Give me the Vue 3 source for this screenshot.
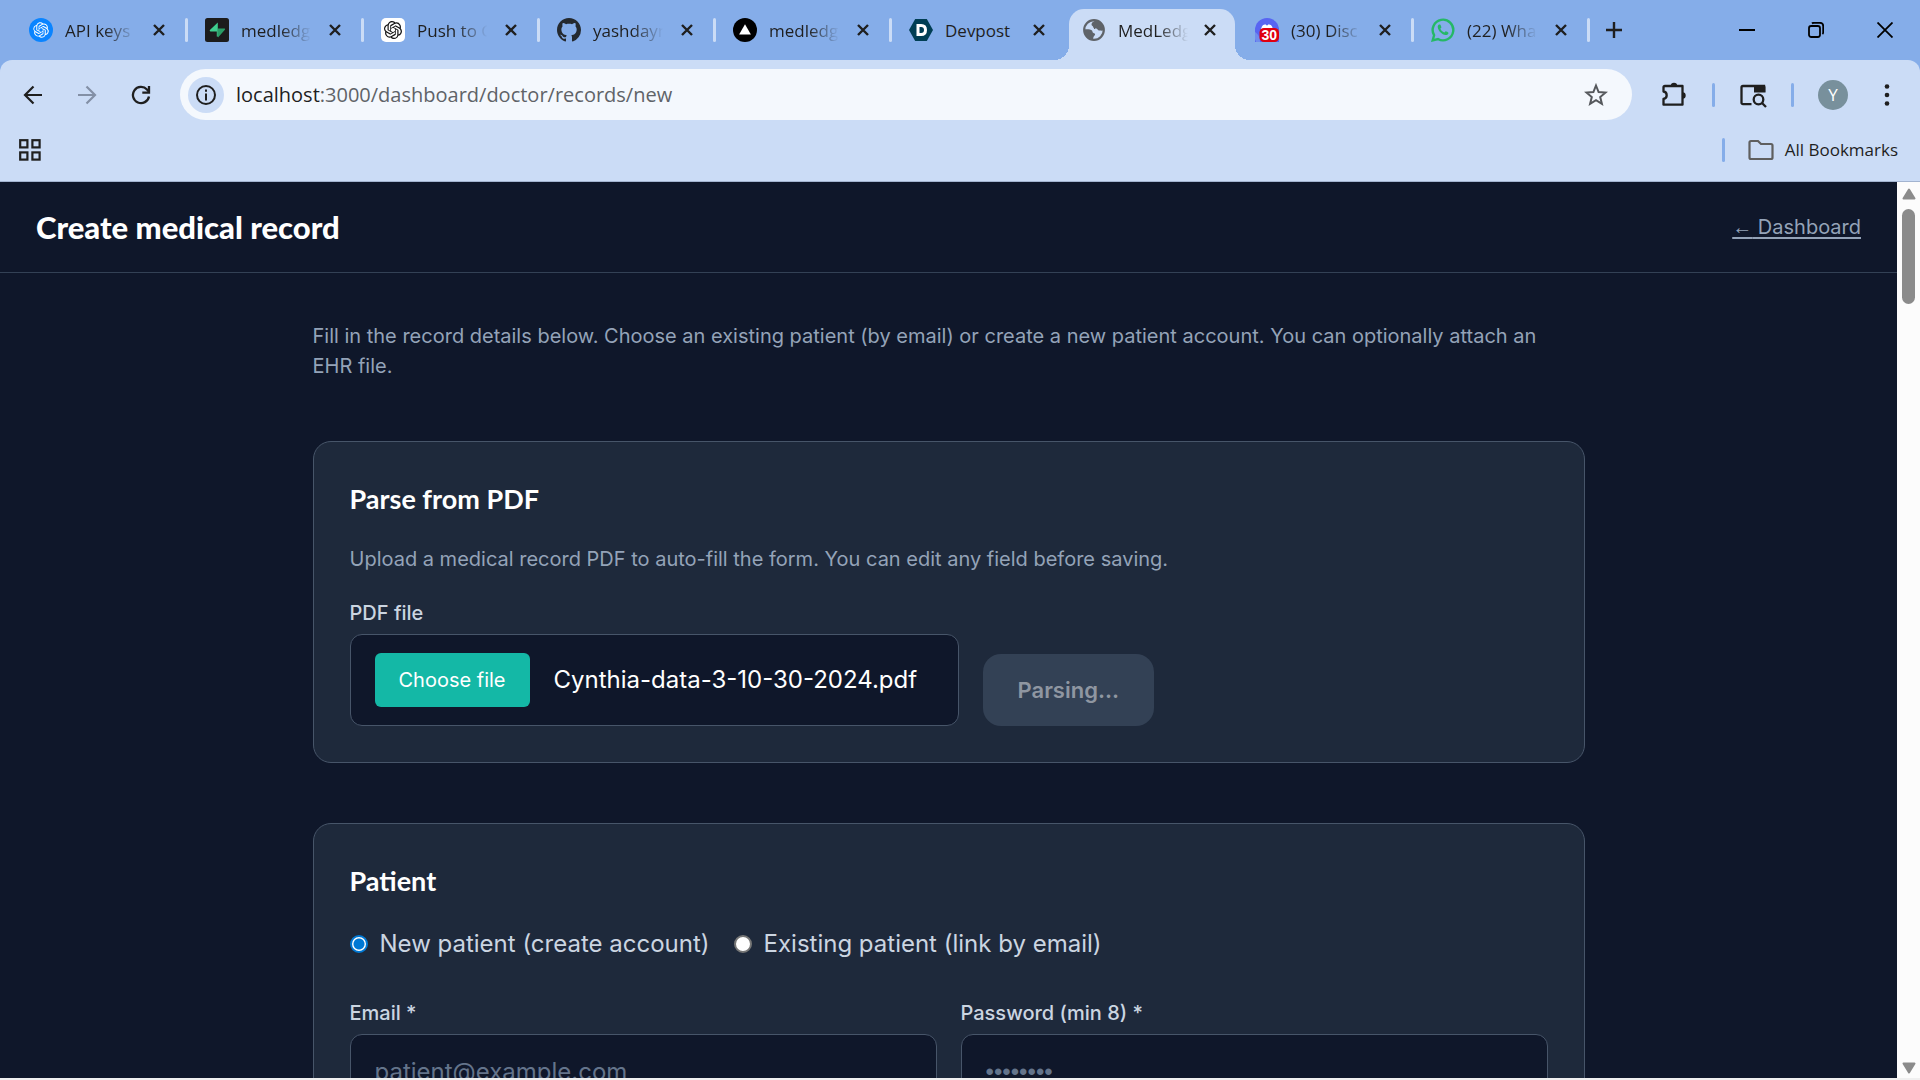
<template>
  <div class="browser">
    <header class="tab-strip">
      <nav class="tabs" aria-label="Open tabs">
        <div
          v-for="(t, i) in tabs" :key="i"
          class="tab" :class="{ active: t.active, plain: t.plain }"
        >
          <svg v-if="t.icon === 'openai'" class="fav" viewBox="0 0 24 24">
            <circle cx="12" cy="12" r="12" fill="#0a84ff" />
            <path :d="knot" fill="#fff" transform="translate(4.2 4.2) scale(.65)" />
          </svg>
          <svg v-else-if="t.icon === 'supabase'" class="fav" viewBox="0 0 24 24">
            <rect width="24" height="24" rx="2.5" fill="#1c1c1c" />
            <path d="M13 4.6v6h6.4c.6 0 .9.7.5 1.2L13 19.6z" fill="#2a9d66" />
            <path d="M12.8 4.6v14.2l-1-.2v-5.2H5.5c-.7 0-1-.8-.6-1.3z" fill="#3ecf8e" />
          </svg>
          <svg v-else-if="t.icon === 'chatgpt'" class="fav" viewBox="0 0 24 24">
            <rect width="24" height="24" rx="5" fill="#fff" />
            <path :d="knot" fill="#111" transform="translate(3 3) scale(.75)" />
          </svg>
          <svg v-else-if="t.icon === 'github'" class="fav" viewBox="0 0 16 16">
            <path fill="#24292f" d="M8 0C3.58 0 0 3.58 0 8c0 3.54 2.29 6.53 5.47 7.59.4.07.55-.17.55-.38 0-.19-.01-.82-.01-1.49-2.01.37-2.53-.49-2.69-.94-.09-.23-.48-.94-.82-1.13-.28-.15-.68-.52-.01-.53.63-.01 1.08.58 1.23.82.72 1.21 1.87.87 2.33.66.07-.52.28-.87.51-1.07-1.78-.2-3.64-.89-3.64-3.95 0-.87.31-1.59.82-2.15-.08-.2-.36-1.02.08-2.12 0 0 .67-.21 2.2.82.64-.18 1.32-.27 2-.27s1.36.09 2 .27c1.53-1.04 2.2-.82 2.2-.82.44 1.1.16 1.92.08 2.12.51.56.82 1.27.82 2.15 0 3.07-1.87 3.75-3.65 3.95.29.25.54.73.54 1.48 0 1.07-.01 1.93-.01 2.2 0 .21.15.46.55.38A8.01 8.01 0 0 0 16 8c0-4.42-3.58-8-8-8z" />
          </svg>
          <svg v-else-if="t.icon === 'vercel'" class="fav" viewBox="0 0 24 24">
            <circle cx="12" cy="12" r="12" fill="#000" />
            <path d="M12 6.2l5.9 10.3H6.1z" fill="#fff" />
          </svg>
          <svg v-else-if="t.icon === 'devpost'" class="fav" viewBox="0 0 24 24">
            <path d="M6.2 1h11.6L24 12l-6.2 11H6.2L0 12z" fill="#003e54" />
            <path d="M9 7.5h3.2c2.9 0 4.3 1.9 4.3 4.5s-1.5 4.5-4.3 4.5H9z" fill="none" stroke="#fff" stroke-width="3" />
          </svg>
          <svg v-else-if="t.icon === 'globe'" class="fav" viewBox="0 0 24 24">
            <circle cx="12" cy="12" r="9.8" fill="none" stroke="#5f6368" stroke-width="2.2" />
            <path fill="#5f6368" d="M13.5 2.5c-2 1-3.8 2-4 3.8-.1 1.5 1.5 1.5 1.7 2.7.2 1.5 1.5 1.4 3 1.4 1.3 0 1.4 2.1 3 2.1 1.9 0 3.2.6 4.8-.5.3-5-3.5-9-8.5-9.5zM2 11.5c2.5-.6 7-.2 8 1 .8 1.2.2 2.2 1.5 2.4 2 .2 2 2 .8 2.9-1 .8-.8 2-1.5 4C5.5 21.5 2 17 2 11.5z" />
          </svg>
          <svg v-else-if="t.icon === 'discord'" class="fav" viewBox="0 0 24 24">
            <path d="M0 24V12a12 12 0 0 1 24 0v12H9z" fill="#5865f2" />
            <path d="M0 21V14c3 2 5 5 5 10H1z" fill="#85ade9" opacity=".55" />
            <path d="M6 12.5c.2-3 1.2-5 2.2-5.5l2.3-.7.6 1h1.8l.6-1 2.3.7c1 .5 2 2.5 2.2 5.5z" fill="#fff" />
            <rect x="4.5" y="10" width="19.5" height="14" rx="4.5" fill="#e00010" />
            <text x="14.2" y="22" text-anchor="middle" class="count">30</text>
          </svg>
          <svg v-else class="fav" viewBox="0 0 24 24">
            <path d="M1.7 22.3l1.4-5.1a10.3 10.3 0 1 1 3.9 3.8z" fill="none" stroke="#25b866" stroke-width="2.4" />
            <path d="M8.2 6.5c-.9.3-1.6 1.3-1.5 2.5.4 3.9 4.3 7.6 7.8 8.1 1.4.2 3-.9 3-2.3 0-.5-2.4-1.7-2.8-1.6-.5.1-1 1.4-1.5 1.3-1.6-.6-3.2-2.2-3.8-3.7-.1-.5 1-1 1-1.5 0-.4-.9-2.7-1.2-2.8z" fill="#25b866" />
          </svg>
          <span class="tab-title" :class="{ fade: t.fade }">{{ t.title }}</span>
          <button class="icon-btn tab-close" :aria-label="'Close ' + t.title">
            <svg width="14" height="14" viewBox="0 0 14 14"><path d="M2 2l10 10M12 2L2 12" stroke="#1f1f1f" stroke-width="2.4" /></svg>
          </button>
        </div>
      </nav>
      <button class="icon-btn new-tab" aria-label="New tab">
        <svg width="16" height="16" viewBox="0 0 16 16"><path d="M8 0v16M0 8h16" stroke="#1f1f1f" stroke-width="2.4" /></svg>
      </button>
      <div class="window-controls">
        <button class="icon-btn" aria-label="Minimize">
          <svg width="16" height="16" viewBox="0 0 16 16"><path d="M0 8h16" stroke="#000" stroke-width="2" /></svg>
        </button>
        <button class="icon-btn" aria-label="Restore">
          <svg width="16" height="16" viewBox="0 0 16 16" fill="none" stroke="#000" stroke-width="1.8">
            <rect x="1" y="4" width="11" height="11" rx="2.2" />
            <path d="M4 1.5c.4-.4 1-.7 1.7-.7H12A3.2 3.2 0 0 1 15.2 4v6.2c0 .8-.3 1.4-.8 1.8" />
          </svg>
        </button>
        <button class="icon-btn" aria-label="Close window">
          <svg width="16" height="16" viewBox="0 0 16 16"><path d="M.5.5l15 15M15.5.5l-15 15" stroke="#000" stroke-width="1.8" /></svg>
        </button>
      </div>
    </header>

    <section class="chrome">
      <div class="toolbar">
        <button class="icon-btn nav-btn" aria-label="Back">
          <svg width="20" height="20" viewBox="0 0 20 20" fill="none" stroke="#1f1f1f" stroke-width="2.2"><path d="M19 10H2.5M10.5 1.5L2 10l8.5 8.5" /></svg>
        </button>
        <button class="icon-btn nav-btn" aria-label="Forward" disabled>
          <svg width="20" height="20" viewBox="0 0 20 20" fill="none" stroke="#8390a6" stroke-width="2.2"><path d="M1 10h16.5M9.5 1.5L18 10l-8.5 8.5" /></svg>
        </button>
        <button class="icon-btn nav-btn" aria-label="Reload">
          <svg width="20" height="20" viewBox="0 0 20 20" fill="none" stroke="#1f1f1f" stroke-width="2.3">
            <path d="M18 11.5A8.1 8.1 0 1 1 16 4.5L18 6.6" />
            <path d="M18 1v6.7h-6.7" />
          </svg>
        </button>
        <div class="omnibox">
          <button class="icon-btn site-info" aria-label="View site information">
            <svg width="22" height="22" viewBox="0 0 22 22">
              <circle cx="11" cy="11" r="9" fill="none" stroke="#1f1f1f" stroke-width="2" />
              <path d="M10 9.5h2v7h-2zM10 5.5h2v2.2h-2z" fill="#1f1f1f" />
            </svg>
          </button>
          <p class="url"><span class="host">localhost</span>:3000/dashboard/doctor/records/new</p>
          <button class="icon-btn" aria-label="Bookmark this tab">
            <svg width="24" height="24" viewBox="0 0 24 24"><path d="M12 2.5l2.6 6.5 7 .5-5.4 4.5 1.7 6.8L12 17.1l-5.9 3.7 1.7-6.8L2.4 9.5l7-.5z" fill="none" stroke="#55585c" stroke-width="2" /></svg>
          </button>
        </div>
        <div class="actions">
          <button class="icon-btn" aria-label="Extensions">
            <svg width="28" height="28" viewBox="0 0 28 28">
              <path d="M5 5h17.5v18.7H3.5V18a3.8 3.8 0 0 0 0-7.5V6.5A1.5 1.5 0 0 1 5 5z" fill="none" stroke="#1f1f1f" stroke-width="2.3" stroke-linejoin="round" />
              <path d="M10.8 5a3.2 3.2 0 0 1 6.4 0zM22.5 11.3a3.2 3.2 0 0 1 0 6.4z" fill="#1f1f1f" />
            </svg>
          </button>
          <i class="divider" />
          <button class="icon-btn" aria-label="Search this page">
            <svg width="28" height="28" viewBox="0 0 28 28" fill="none" stroke="#1f1f1f" stroke-width="2.3">
              <path d="M12.5 23.2H4a1.5 1.5 0 0 1-1.5-1.5V6.5A1.5 1.5 0 0 1 4 5h21v6" />
              <path d="M15 4h9.5a2 2 0 0 1 2 2v5.5H15z" fill="#1f1f1f" stroke="none" />
              <circle cx="19.5" cy="18.5" r="4.8" />
              <path d="M23 22l4 4" />
            </svg>
          </button>
          <i class="divider" />
          <button class="icon-btn avatar">Y</button>
          <button class="icon-btn menu" aria-label="Menu">
            <svg width="6" height="22" viewBox="0 0 6 22" fill="#1f1f1f"><circle cx="3" cy="2.5" r="2.3" /><circle cx="3" cy="11" r="2.3" /><circle cx="3" cy="19.5" r="2.3" /></svg>
          </button>
        </div>
      </div>
      <div class="bookmarks">
        <button class="icon-btn" aria-label="Apps">
          <svg width="22" height="22" viewBox="0 0 22 22" fill="none" stroke="#1f1f1f" stroke-width="2.2">
            <rect x="1.2" y="1.2" width="7.2" height="7.2" /><rect x="13.4" y="1.2" width="7.2" height="7.2" />
            <rect x="1.2" y="13.4" width="7.2" height="7.2" /><rect x="13.4" y="13.4" width="7.2" height="7.2" />
          </svg>
        </button>
        <div class="all-bookmarks">
          <i class="divider" />
          <button class="icon-btn folder">
            <svg width="26" height="22" viewBox="0 0 26 22"><path d="M3 2h7l3 3h10a1.5 1.5 0 0 1 1.5 1.5v12A1.5 1.5 0 0 1 23 20H3a1.5 1.5 0 0 1-1.5-1.5v-15A1.5 1.5 0 0 1 3 2z" fill="none" stroke="#5f5f5f" stroke-width="2.2" /></svg>
            All Bookmarks
          </button>
        </div>
      </div>
    </section>

    <div class="viewport">
      <div class="page">
        <header class="page-head">
          <h1>Create medical record</h1>
          <a href="#"><span class="arrow">←</span> Dashboard</a>
        </header>

        <main class="content">
          <p class="intro">
            Fill in the record details below. Choose an existing patient (by email) or create a new patient account. You can optionally attach an EHR file.
          </p>

          <section class="card">
            <h2>Parse from PDF</h2>
            <p class="muted">Upload a medical record PDF to auto-fill the form. You can edit any field before saving.</p>
            <div class="upload">
              <div class="field">
                <label for="pdf">PDF file</label>
                <div class="file-box">
                  <input id="pdf" class="file-input" type="file" accept="application/pdf" @change="pickFile">
                  <label for="pdf" class="choose">Choose file</label>
                  <span>{{ fileName }}</span>
                </div>
              </div>
              <button class="parse" :disabled="parsing">{{ parsing ? 'Parsing…' : 'Parse PDF' }}</button>
            </div>
          </section>

          <section class="card">
            <h2>Patient</h2>
            <div class="radios">
              <label><input v-model="mode" type="radio" name="mode" value="new"> New patient (create account)</label>
              <label><input v-model="mode" type="radio" name="mode" value="existing"> Existing patient (link by email)</label>
            </div>
            <div class="grid">
              <div class="field">
                <label for="email">Email *</label>
                <input id="email" v-model="email" class="text-input" type="email" placeholder="patient@example.com">
              </div>
              <div class="field">
                <label for="password">Password (min 8) *</label>
                <input id="password" v-model="password" class="text-input" type="password" placeholder="••••••••">
              </div>
            </div>
          </section>
        </main>
      </div>

      <aside class="scrollbar" aria-hidden="true">
        <svg width="14" height="12" viewBox="0 0 14 12"><path d="M7 1.5l5.5 9h-11z" fill="#8b8b8b" stroke="#8b8b8b" stroke-width="2" stroke-linejoin="round" /></svg>
        <div class="thumb" />
        <svg width="14" height="12" viewBox="0 0 14 12"><path d="M7 10.5l5.5-9h-11z" fill="#8b8b8b" stroke="#8b8b8b" stroke-width="2" stroke-linejoin="round" /></svg>
      </aside>
    </div>
  </div>
</template>

<script setup>
import { ref } from 'vue'

const knot = 'M22.2819 9.8211a5.9847 5.9847 0 0 0-.5157-4.9108 6.0462 6.0462 0 0 0-6.5098-2.9A6.0651 6.0651 0 0 0 4.9807 4.1818a5.9847 5.9847 0 0 0-3.9977 2.9 6.0462 6.0462 0 0 0 .7427 7.0966 5.98 5.98 0 0 0 .511 4.9107 6.051 6.051 0 0 0 6.5146 2.9001A5.9847 5.9847 0 0 0 13.2599 24a6.0557 6.0557 0 0 0 5.7718-4.2058 5.9894 5.9894 0 0 0 3.9977-2.9001 6.0557 6.0557 0 0 0-.7475-7.0729zm-9.022 12.6081a4.4755 4.4755 0 0 1-2.8764-1.0408l.1419-.0804 4.7783-2.7582a.7948.7948 0 0 0 .3927-.6813v-6.7369l2.02 1.1686a.071.071 0 0 1 .038.052v5.5826a4.504 4.504 0 0 1-4.4945 4.4944zm-9.6607-4.1254a4.4708 4.4708 0 0 1-.5346-3.0137l.142.0852 4.783 2.7582a.7712.7712 0 0 0 .7806 0l5.8428-3.3685v2.3324a.0804.0804 0 0 1-.0332.0615L9.74 19.9502a4.4992 4.4992 0 0 1-6.1408-1.6464zM2.3408 7.8956a4.485 4.485 0 0 1 2.3655-1.9728V11.6a.7664.7664 0 0 0 .3879.6765l5.8144 3.3543-2.0201 1.1685a.0757.0757 0 0 1-.071 0l-4.8303-2.7865A4.504 4.504 0 0 1 2.3408 7.872zm16.5963 3.8558L13.1038 8.364 15.1192 7.2a.0757.0757 0 0 1 .071 0l4.8303 2.7913a4.4944 4.4944 0 0 1-.6765 8.1042v-5.6772a.79.79 0 0 0-.407-.667zm2.0107-3.0231l-.142-.0852-4.7735-2.7818a.7759.7759 0 0 0-.7854 0L9.409 9.2297V6.8974a.0662.0662 0 0 1 .0284-.0615l4.8303-2.7866a4.4992 4.4992 0 0 1 6.6802 4.66zM8.3065 12.863l-2.02-1.1638a.0804.0804 0 0 1-.038-.0567V6.0742a4.4992 4.4992 0 0 1 7.3757-3.4537l-.142.0805L8.704 5.459a.7948.7948 0 0 0-.3927.6813zm1.0976-2.3654l2.602-1.4998 2.6069 1.4998v2.9994l-2.5974 1.4997-2.6067-1.4997Z'

// plain: no separator after the tab
const tabs = [
  { icon: 'openai', title: 'API keys', fade: true },
  { icon: 'supabase', title: 'medledg', fade: true },
  { icon: 'chatgpt', title: 'Push to G', fade: true },
  { icon: 'github', title: 'yashdayn', fade: true },
  { icon: 'vercel', title: 'medledg', fade: true },
  { icon: 'devpost', title: 'Devpost', plain: true },
  { icon: 'globe', title: 'MedLedg', fade: true, active: true, plain: true },
  { icon: 'discord', title: '(30) Disc', fade: true },
  { icon: 'whatsapp', title: '(22) Wha', fade: true }
]

const fileName = ref('Cynthia-data-3-10-30-2024.pdf')
const parsing = ref(true)
const mode = ref('new')
const email = ref('')
const password = ref('')

function pickFile(e) {
  const f = e.target.files[0]
  if (f) fileName.value = f.name
}
</script>

<style>
body { margin: 0; background: #f0f0f0; }
</style>

<style scoped>
* { box-sizing: border-box; }
h1, h2, p { margin: 0; }
.browser {
  height: 100vh; padding-bottom: 2px; display: flex; flex-direction: column; overflow: hidden;
  font-family: "Open Sans", "Noto Sans", sans-serif; color: #1f1f1f; background: #f0f0f0;
}
.icon-btn {
  border: 0; background: none; padding: 0; color: inherit; font: inherit;
  display: flex; align-items: center; justify-content: center; flex: none;
}
.icon-btn svg, .fav, .scrollbar svg { display: block; flex: none; }

/* tab strip */
.tab-strip { display: flex; align-items: stretch; height: 60px; padding: 0 27px 0 12px; background: #85ade9; }
.tabs { display: flex; }
.tab { position: relative; width: 176px; display: flex; align-items: center; padding-left: 17px; z-index: 0; }
.fav { width: 24px; height: 24px; }
.count { font: 700 14px "Liberation Sans", Arial, sans-serif; fill: #fff; }
.tab-title { width: 78px; padding-top: 2px; margin-left: 12px; font-size: 17px; line-height: 24px; white-space: nowrap; overflow: hidden; }
.tab-title.fade { mask-image: linear-gradient(90deg, #000 50%, transparent 90%); }
.tab-close { width: 24px; height: 24px; margin-left: 4px; }
.tab:not(.plain)::after { content: ''; width: 3px; height: 24px; margin-left: auto; border-radius: 2px; background: #cbdcf6; }
.tab.active { width: 166px; margin: 0 3px 0 1px; padding-left: 13px; }
.tab.active .tab-close { margin-left: 2px; }
.tab.active::before {
  content: ''; position: absolute; z-index: -1; inset: 9px 0 0;
  background: #cbdcf6; border-radius: 15px 15px 0 0;
}
.tab.active::after {
  content: ''; position: absolute; z-index: -1; left: -15px; right: -15px; bottom: 0; height: 15px;
  background:
    radial-gradient(circle at 0 0, transparent 15px, #cbdcf6 15px) left / 15px 15px no-repeat,
    radial-gradient(circle at 100% 0, transparent 15px, #cbdcf6 15px) right / 15px 15px no-repeat;
}
.new-tab { width: 48px; }
.window-controls { margin-left: auto; display: flex; gap: 53px; }

/* toolbar */
.chrome { flex: none; background: linear-gradient(#85ade9, #85ade9) top / 100% 12px no-repeat; }
.toolbar { height: 69px; display: flex; align-items: center; padding: 0 30px 0 6px; background: #cbdcf6; border-radius: 12px 12px 0 0; }
.nav-btn { width: 54px; height: 36px; }
.omnibox {
  flex: 1; height: 51px; margin-left: 12px; padding: 0 24px 0 8px; display: flex; align-items: center;
  border-radius: 26px; background: #f4f8fd;
}
.site-info { width: 36px; height: 36px; border-radius: 50%; background: #cbdcf6; }
.url { flex: 1; margin-left: 12px; font-size: 20px; line-height: 30px; color: #5f6368; }
.host { color: #1f1f1f; }
.actions { display: flex; align-items: center; gap: 24px; margin-left: 28px; }
.divider { width: 3px; height: 24px; border-radius: 2px; background: #85ade9; }
.avatar { width: 30px; height: 30px; border-radius: 50%; background: #78909c; color: #fff; font-size: 17px; }
.menu { margin-left: 12px; }
.bookmarks {
  height: 53px; padding: 0 22px 10px 19px; display: flex; align-items: center; justify-content: space-between;
  background: #cbdcf6; border-bottom: 1px solid #a3b4d0;
}
.all-bookmarks { display: flex; align-items: center; gap: 23px; }
.folder { gap: 11px; font-size: 17px; line-height: 24px; }

/* page */
.viewport { flex: 1; min-height: 0; display: flex; background: #0f172a; }
.page { flex: 1; overflow: hidden; font-family: "Inter", "Open Sans", sans-serif; font-size: 24px; line-height: 36px; color: #cbd5e1; }
.page-head { height: 91px; padding: 0 36px; display: flex; align-items: center; justify-content: space-between; border-bottom: 1px solid #334155; }
h1, h2 { font-family: "Lato", sans-serif; color: #fff; line-height: 42px; }
h1 { font-size: 31px; font-weight: 900; }
h2 { font-size: 27px; font-weight: 700; }
.page-head a { font-size: 20px; line-height: 30px; color: #94a3b8; text-underline-offset: 3px; }
.arrow { font-family: "Liberation Sans", Arial, sans-serif; }
.content { max-width: 1344px; margin: 0 auto; padding: 48px 36px; display: flex; flex-direction: column; gap: 60px; }
.intro, .muted { font-size: 20px; line-height: 30px; color: #94a3b8; }
.intro { padding-right: 12px; }
.card { padding: 36px; border: 1px solid #475569; border-radius: 18px; background: #1e293b; display: flex; flex-direction: column; gap: 24px; }
.upload { display: flex; align-items: flex-end; gap: 24px; }
.field { display: flex; flex-direction: column; gap: 6px; }
.field > label { font-size: 20px; line-height: 30px; font-weight: 500; }
.file-box {
  position: relative; min-width: 609px; height: 92px; padding: 0 24px; display: flex; align-items: center; gap: 24px;
  border: 1px solid #475569; border-radius: 12px; background: #0f172a; color: #fff; font-size: 24px;
}
.file-input { position: absolute; inset: 0; width: 100%; opacity: 0; }
.choose { position: relative; padding: 12px 24px; border-radius: 6px; background: #14b8a6; font-size: 20px; line-height: 30px; }
.parse { height: 72px; padding: 0 35px; border: 0; border-radius: 18px; background: #334155; color: #fff; font: 600 22px/36px "Inter", sans-serif; }
.parse:disabled { color: #8f96a1; }
.radios { display: flex; gap: 24px; }
.radios label { display: flex; align-items: center; gap: 12px; }
.radios input {
  appearance: none; width: 18px; height: 18px; margin: 0; border: 2px solid #767676; border-radius: 50%;
  background: #fff;
}
.radios input:checked { border-color: #0078d4; background: radial-gradient(circle, #0078d4 5px, #fff 6px); }
.grid { margin-top: 12px; display: grid; grid-template-columns: 1fr 1fr; gap: 24px; }
.text-input {
  width: 100%; height: 74px; padding: 18px 24px; border: 1px solid #475569; border-radius: 12px; background: #0f172a;
  color: #fff; font: 400 24px/36px "Inter", "Open Sans", sans-serif;
}
.text-input::placeholder { color: #64748b; opacity: 1; }
.text-input[type="password"]::placeholder { font-family: "Liberation Sans", Arial, sans-serif; }

.scrollbar { width: 23px; padding: 6px 0 4px; display: flex; flex-direction: column; align-items: center; background: #fcfcfc; }
.thumb { width: 13px; height: 95px; margin: 9px 0 auto; border-radius: 7px; background: #8b8b8b; }
</style>
